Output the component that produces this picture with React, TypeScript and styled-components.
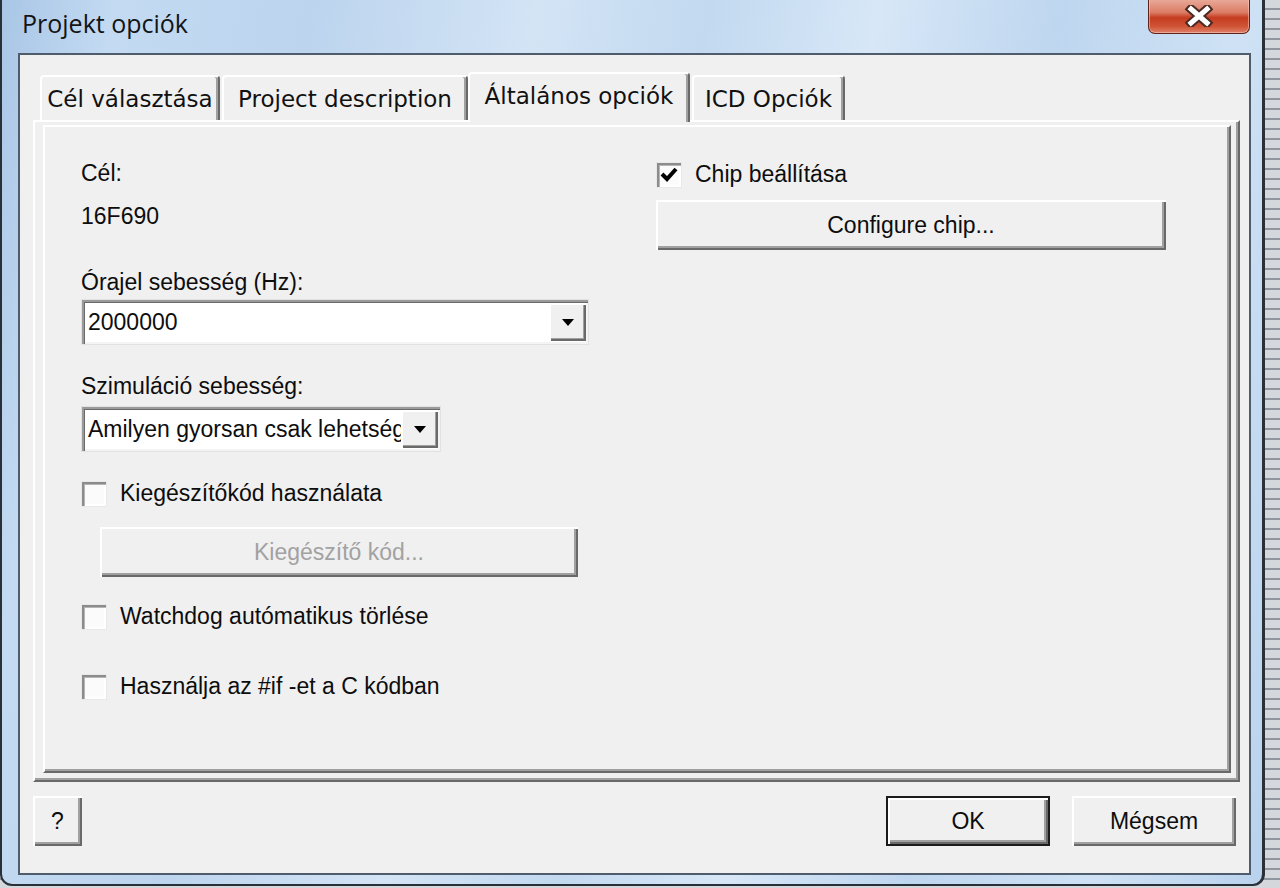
import React from 'react';
import styled, { createGlobalStyle } from 'styled-components';

const GlobalStyle = createGlobalStyle`
  html, body { margin: 0; padding: 0; }
  body {
    width: 1280px; height: 888px; overflow: hidden;
    background: repeating-linear-gradient(to bottom, #d4d8dd 0 8px, #8f969e 8px 10px);
    font-family: "Liberation Sans", Arial, sans-serif;
  }
`;

const Screen = styled.div`
  width: 1280px; height: 888px;
  display: flex; align-items: flex-start;
`;

const Window = styled.div`
  width: 1265px; height: 886px; box-sizing: border-box;
  border: 2px solid #2a3038; border-top: none; border-right-width: 3px;
  border-radius: 0 0 12px 12px;
  background: linear-gradient(100deg, #a9c6e6 0%, #c3daf2 8%, #bcd4ee 22%, #d3e4f5 38%, #c2d9f0 50%, #d7e7f7 62%, #bed6ef 75%, #cfe2f5 88%, #b9d2ed 100%);
  display: flex; flex-direction: column;
  padding: 0 11px 9px 16px;
`;

const TitleBar = styled.div`
  height: 53px; flex: none;
  display: flex; align-items: flex-start; justify-content: space-between;
`;

const TitleText = styled.div`
  margin: 8px 0 0 4px;
  font-family: "Open Sans", "Liberation Sans", sans-serif;
  font-size: 25px; line-height: 30px; color: #141414;
`;

const CloseButton = styled.div`
  width: 102px; height: 35px; margin: -1px 1px 0 0; box-sizing: border-box;
  border: 1px solid #5e2419; border-top: none; border-radius: 0 0 7px 7px;
  background: linear-gradient(to bottom, #e9ab9b 0%, #dc7b64 40%, #c53b20 55%, #cf5334 80%, #e0806a 100%);
  box-shadow: inset 0 0 0 1px rgba(255, 210, 200, 0.5);
  display: flex; align-items: center; justify-content: center;
`;

const Client = styled.div`
  flex: 1; min-height: 0;
  border: 2px solid #4f5c6b; background: #f0f0f0;
  display: flex; flex-direction: column;
  padding: 17px 9px 27px 13px;
`;

const TabRow = styled.div`
  height: 50px; flex: none; display: flex; align-items: flex-end;
  padding-left: 7px; margin-bottom: -2px; position: relative; z-index: 1;
`;

const Tab = styled.div<{ $active?: boolean; $w: number; $gap?: number }>`
  width: ${p => p.$w}px; height: ${p => (p.$active ? 50 : 45)}px;
  margin-bottom: ${p => (p.$active ? 0 : 2)}px; margin-left: ${p => p.$gap || 0}px;
  box-sizing: border-box; flex: none;
  border-top: 2px solid #ffffff; border-left: 2px solid #ffffff;
  border-right: 2px solid #696969; border-radius: 4px 4px 0 0;
  box-shadow: inset -2px 0 0 #a0a0a0;
  background: #f0f0f0;
  display: flex; align-items: center; justify-content: center;
  padding-bottom: ${p => (p.$active ? 4 : 0)}px;
  font-family: "DejaVu Sans", sans-serif; font-size: 23px; color: #111;
  white-space: nowrap;
`;

const Pane = styled.div`
  height: 662px; flex: none; box-sizing: border-box;
  border-top: 2px solid #ffffff; border-left: 2px solid #ffffff;
  border-right: 2px solid #696969; border-bottom: 2px solid #696969;
  box-shadow: inset -2px -2px 0 #a0a0a0;
  padding: 3px 7px 7px 8px;
  display: flex;
`;

const Page = styled.div`
  flex: 1; box-sizing: border-box;
  border-top: 2px solid #ffffff; border-left: 2px solid #ffffff;
  border-right: 2px solid #696969; border-bottom: 2px solid #696969;
  box-shadow: inset -2px -2px 0 #a0a0a0;
  display: grid; grid-template-columns: 510px 510px; column-gap: 65px;
  align-items: start;
  padding: 34px 0 0 36px;
`;

const Column = styled.div<{ $top?: number }>`
  display: flex; flex-direction: column; align-items: flex-start;
  padding-top: ${p => p.$top || 0}px;
`;

const Label = styled.div<{ $top?: number }>`
  margin-top: ${p => p.$top || 0}px;
  font-size: 23px; line-height: 24px; color: #0d0d0d; white-space: nowrap;
`;

const Combo = styled.div<{ $w: number; $top?: number }>`
  width: ${p => p.$w}px; height: 44px; margin: ${p => p.$top || 0}px 0 0 1px;
  box-sizing: border-box; flex: none;
  background: #ffffff;
  box-shadow: inset 2px 2px 0 #9a9a9a, inset 3px 3px 0 #6a6a6a, inset -2px -2px 0 #f4f4f4, 0 0 0 1px #e2e2e2;
  padding: 3px 2px 3px 4px;
  display: flex; align-items: stretch;
`;

const ComboText = styled.div`
  flex: 1; min-width: 0; overflow: hidden; white-space: nowrap;
  display: flex; align-items: center; padding-left: 2px;
  font-size: 23px; color: #0d0d0d;
`;

const DropButton = styled.div`
  width: 37px; flex: none; background: #f0f0f0;
  box-shadow: inset 2px 2px 0 #ffffff, inset -2px -2px 0 #6a6a6a, inset -3px -3px 0 #a0a0a0;
  display: flex; align-items: center; justify-content: center;
`;

const CheckRow = styled.label<{ $top?: number }>`
  margin: ${p => p.$top || 0}px 0 0 1px; height: 25px;
  display: flex; align-items: center; gap: 14px;
  font-size: 23px; color: #0d0d0d; white-space: nowrap;
`;

const Box = styled.span`
  width: 24px; height: 24px; flex: none; box-sizing: border-box;
  background: #fbfbfb;
  box-shadow: inset 2px 2px 0 #8c8c8c, inset 3px 3px 0 #b5b5b5, inset -2px -2px 0 #ffffff, 0 0 0 1px #e8e8e8;
  display: flex; align-items: center; justify-content: center;
`;

const Button = styled.div<{ $w: number; $top?: number; $left?: number; $disabled?: boolean; $default?: boolean }>`
  width: ${p => p.$w}px; height: 50px; flex: none; box-sizing: border-box;
  margin: ${p => p.$top || 0}px 0 0 ${p => p.$left || 0}px;
  background: #f0f0f0;
  border: ${p => (p.$default ? '2px solid #1b1b1b' : 'none')};
  box-shadow: inset 2px 2px 0 #ffffff, inset -2px -2px 0 #696969, inset -4px -4px 0 #a0a0a0;
  display: flex; align-items: center; justify-content: center;
  font-size: 23px; color: ${p => (p.$disabled ? '#a2a2a2' : '#0d0d0d')};
  white-space: nowrap;
`;

const Footer = styled.div`
  margin-top: 14px; height: 50px; flex: none;
  display: flex; align-items: center; gap: 22px;
  padding-right: 4px;
`;

const Spacer = styled.div`flex: 1;`;

const CloseGlyph = () => (
  <svg width="28" height="22" viewBox="0 0 28 22">
    <path d="M6 4 L22 18 M22 4 L6 18" stroke="#4a2a24" strokeWidth="9" strokeLinecap="square" />
    <path d="M6 4 L22 18 M22 4 L6 18" stroke="#ffffff" strokeWidth="5" strokeLinecap="square" />
  </svg>
);

const Arrow = () => (
  <svg width="12" height="7" viewBox="0 0 12 7">
    <polygon points="0,0 12,0 6,7" fill="#000" />
  </svg>
);

const Tick = () => (
  <svg width="18" height="16" viewBox="0 0 18 16">
    <polyline points="2,7 7,12 16,2" fill="none" stroke="#000" strokeWidth="4" />
  </svg>
);

export default function App() {
  return (
    <>
      <GlobalStyle />
      <Screen>
        <Window>
          <TitleBar>
            <TitleText>Projekt opciók</TitleText>
            <CloseButton><CloseGlyph /></CloseButton>
          </TitleBar>
          <Client>
            <TabRow>
              <Tab $w={180}>Cél választása</Tab>
              <Tab $w={246} $gap={2}>Project description</Tab>
              <Tab $w={222} $active>Általános opciók</Tab>
              <Tab $w={153} $gap={2}>ICD Opciók</Tab>
            </TabRow>
            <Pane>
              <Page>
                <Column>
                  <Label>Cél:</Label>
                  <Label $top={19}>16F690</Label>
                  <Label $top={42}>Órajel sebesség (Hz):</Label>
                  <Combo $w={506} $top={6}>
                    <ComboText>2000000</ComboText>
                    <DropButton><Arrow /></DropButton>
                  </Combo>
                  <Label $top={30}>Szimuláció sebesség:</Label>
                  <Combo $w={358} $top={9}>
                    <ComboText>Amilyen gyorsan csak lehetséges</ComboText>
                    <DropButton><Arrow /></DropButton>
                  </Combo>
                  <CheckRow $top={30}><Box />Kiegészítőkód használata</CheckRow>
                  <Button $w={478} $top={21} $left={19} $disabled>Kiegészítő kód...</Button>
                  <CheckRow $top={27}><Box />Watchdog autómatikus törlése</CheckRow>
                  <CheckRow $top={45}><Box />Használja az #if -et a C kódban</CheckRow>
                </Column>
                <Column $top={1}>
                  <CheckRow><Box><Tick /></Box>Chip beállítása</CheckRow>
                  <Button $w={510} $top={13}>Configure chip...</Button>
                </Column>
              </Page>
            </Pane>
            <Footer>
              <Button $w={49}>?</Button>
              <Spacer />
              <Button $w={164} $default>OK</Button>
              <Button $w={164}>Mégsem</Button>
            </Footer>
          </Client>
        </Window>
      </Screen>
    </>
  );
}
